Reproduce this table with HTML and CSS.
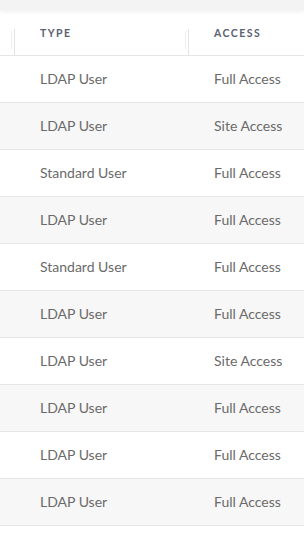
FILE: index.html
```html
<!DOCTYPE html>
<html lang="en">
<head>
    <meta charset="UTF-8">
    <meta name="viewport" content="width=device-width, initial-scale=1.0">
    <title>Users</title>
    <link rel="stylesheet" href="styles.css">
</head>
<body>
    <div class="toolbar-strip"></div>
    <div class="user-table">
        <div class="table-head">
            <div class="cell lead"></div>
            <div class="cell col-type"><span class="resizer"></span>Type</div>
            <div class="cell col-access"><span class="resizer"></span>Access</div>
        </div>
        <div class="table-row">
            <div class="cell lead"></div>
            <div class="cell col-type">LDAP User</div>
            <div class="cell col-access">Full Access</div>
        </div>
        <div class="table-row">
            <div class="cell lead"></div>
            <div class="cell col-type">LDAP User</div>
            <div class="cell col-access">Site Access</div>
        </div>
        <div class="table-row">
            <div class="cell lead"></div>
            <div class="cell col-type">Standard User</div>
            <div class="cell col-access">Full Access</div>
        </div>
        <div class="table-row">
            <div class="cell lead"></div>
            <div class="cell col-type">LDAP User</div>
            <div class="cell col-access">Full Access</div>
        </div>
        <div class="table-row">
            <div class="cell lead"></div>
            <div class="cell col-type">Standard User</div>
            <div class="cell col-access">Full Access</div>
        </div>
        <div class="table-row">
            <div class="cell lead"></div>
            <div class="cell col-type">LDAP User</div>
            <div class="cell col-access">Full Access</div>
        </div>
        <div class="table-row">
            <div class="cell lead"></div>
            <div class="cell col-type">LDAP User</div>
            <div class="cell col-access">Site Access</div>
        </div>
        <div class="table-row">
            <div class="cell lead"></div>
            <div class="cell col-type">LDAP User</div>
            <div class="cell col-access">Full Access</div>
        </div>
        <div class="table-row">
            <div class="cell lead"></div>
            <div class="cell col-type">LDAP User</div>
            <div class="cell col-access">Full Access</div>
        </div>
        <div class="table-row">
            <div class="cell lead"></div>
            <div class="cell col-type">LDAP User</div>
            <div class="cell col-access">Full Access</div>
        </div>
    </div>
</body>
</html>
```

FILE: styles.css
```css
body {
    margin: 0;
    background-color: #ffffff;
    font-family: 'Lato', 'Liberation Sans', sans-serif;
    overflow: hidden;
}
.toolbar-strip {
    height: 10px;
    background-color: #f3f3f3;
    box-shadow: 0 2px 4px rgba(0, 0, 0, 0.06);
    position: relative;
    z-index: 1;
}
.user-table {
    margin-top: 4px;
}
.table-head, .table-row {
    display: flex;
    border-bottom: 1px solid #e6e6e6;
}
.table-head {
    height: 41px;
    align-items: center;
    font-size: 10.5px;
    font-weight: bold;
    letter-spacing: 1.5px;
    text-transform: uppercase;
    color: #5a6171;
}
.table-row {
    box-sizing: border-box;
    height: 47px;
    padding-bottom: 2px;
    align-items: center;
    font-size: 14px;
    color: #6a6a6a;
}
.table-row:nth-child(odd) {
    background-color: #f7f7f7;
}
.cell {
    position: relative;
    box-sizing: border-box;
    padding-left: 26px;
    white-space: nowrap;
}
.lead {
    width: 14px;
    padding-left: 0;
}
.col-type {
    width: 174px;
}
.col-access {
    flex: 1;
}
.table-head .cell {
    height: 100%;
    display: flex;
    align-items: center;
    padding-bottom: 4px;
}
.resizer {
    position: absolute;
    left: 0;
    top: 15px;
    bottom: 0;
    width: 1px;
    background-color: #e3e3e3;
}
.resizer::before {
    content: '';
    position: absolute;
    left: -3px;
    top: 2px;
    height: 18px;
    width: 1px;
    background-color: #ececec;
}
```
